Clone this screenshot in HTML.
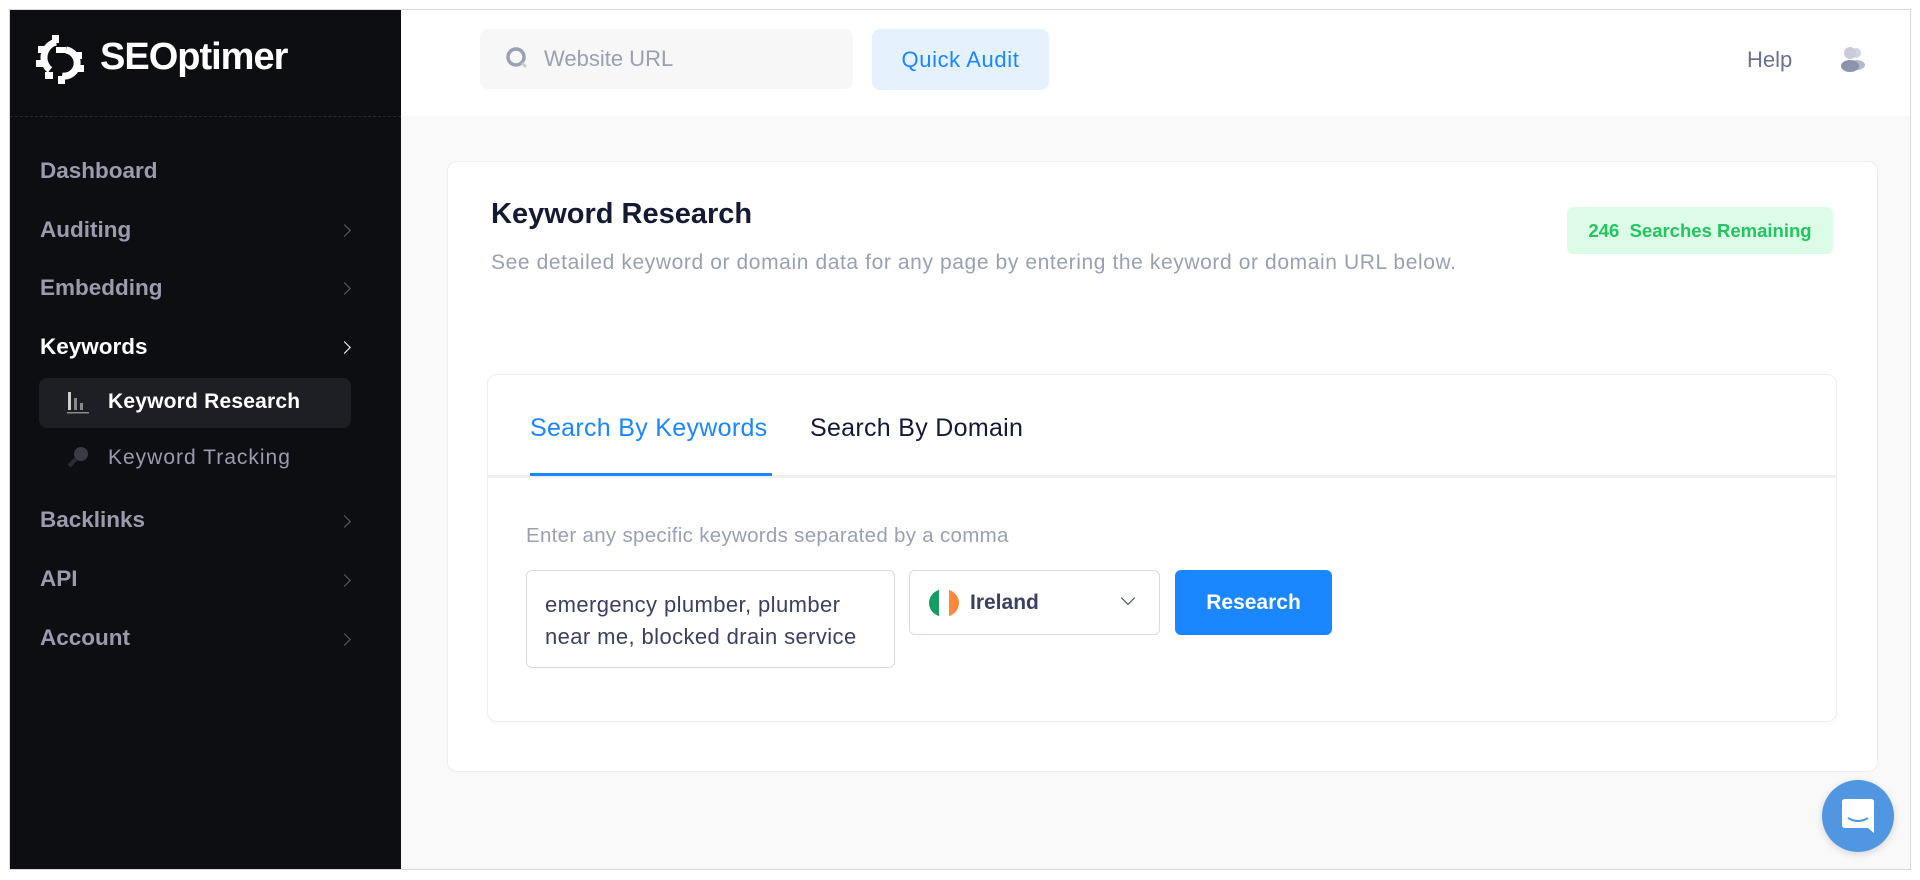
<!DOCTYPE html>
<html><head><meta charset="utf-8"><style>
*{box-sizing:border-box;margin:0;padding:0}
body{width:1920px;height:880px;background:#fff;font-family:"Liberation Sans",sans-serif;position:relative;overflow:hidden}
.frame{position:absolute;left:9px;top:9px;width:1902px;height:861px;border:1px solid #d9d9d9;background:#f9f9fa;overflow:hidden}
.side{position:absolute;left:0;top:0;width:391px;height:100%;background:#0d0e12}
.hdr{position:absolute;left:391px;top:0;right:0;height:106px;background:#fff}
.dash{position:absolute;left:0;top:106px;width:391px;border-top:1px dashed #2a2c33}
.nav{position:absolute;left:30px;font-size:22.5px;font-weight:bold;color:#9a9cae}
.chev{position:absolute;left:330px;width:9px;height:9px;border-right:1.5px solid #5c5f6c;border-top:1.5px solid #5c5f6c;transform:rotate(45deg)}
.card{position:absolute;left:437px;top:151px;width:1431px;height:611px;background:#fff;border:1px solid #eceef1;border-radius:10px}
.inner{position:absolute;left:39px;top:212px;width:1350px;height:348px;border:1px solid #eceef1;border-radius:10px;box-shadow:0 2px 4px rgba(0,0,0,.03)}
</style></head><body>
<div class="frame">
 <div class="side">
  <svg style="position:absolute;left:22px;top:20px" width="56" height="56" viewBox="0 0 56 56">
   <g fill="none" stroke="#fff" stroke-width="7">
    <path d="M24 12 A16 16 0 0 0 18 40"/>
    <path d="M34 20 A12 12 0 0 1 30 46"/>
   </g>
   <g fill="#fff">
    <rect x="20" y="5" width="7" height="8"/><rect x="6" y="16" width="8" height="7"/><rect x="4" y="30" width="8" height="7"/><rect x="13" y="42" width="8" height="7"/>
    <rect x="24" y="17" width="10" height="6"/><rect x="42" y="22" width="8" height="7"/><rect x="44" y="35" width="8" height="7"/><rect x="26" y="46" width="7" height="8"/>
   </g>
  </svg>
  <div style="position:absolute;left:90px;top:26px;font-size:38px;font-weight:bold;color:#fff;letter-spacing:-1px">SEOptimer</div>
  <div class="nav" style="top:148px">Dashboard</div>
  <div class="nav" style="top:207px">Auditing</div><div class="chev" style="top:216px"></div>
  <div class="nav" style="top:265px">Embedding</div><div class="chev" style="top:274px"></div>
  <div class="nav" style="top:324px;color:#fff">Keywords</div><div class="chev" style="top:333px;border-color:#fff"></div>
  <div style="position:absolute;left:29px;top:368px;width:312px;height:50px;background:#1e1f24;border-radius:8px"></div>
  <svg style="position:absolute;left:56px;top:380px" width="24" height="24" viewBox="0 0 24 24"><rect x="2" y="2" width="3" height="18" fill="#ccc"/><rect x="8" y="8" width="3" height="12" fill="#888"/><rect x="14" y="13" width="3" height="7" fill="#888"/><rect x="1" y="22" width="22" height="1.5" fill="#888"/></svg>
  <div class="nav" style="left:98px;top:380px;font-size:21px;color:#fff;letter-spacing:.2px">Keyword Research</div>
  <svg style="position:absolute;left:56px;top:435px" width="24" height="24" viewBox="0 0 24 24"><circle cx="15" cy="9" r="7" fill="#3a3c44"/><path d="M10 14 L3 21" stroke="#2a2c33" stroke-width="4"/></svg>
  <div class="nav" style="left:98px;top:436px;font-size:21px;font-weight:normal;color:#9a9cae;letter-spacing:1px">Keyword Tracking</div>
  <div class="nav" style="top:497px">Backlinks</div><div class="chev" style="top:507px"></div>
  <div class="nav" style="top:556px">API</div><div class="chev" style="top:566px"></div>
  <div class="nav" style="top:615px">Account</div><div class="chev" style="top:625px"></div>
 </div>
 <div class="dash"></div>
 <div class="hdr">
  <div style="position:absolute;left:79px;top:19px;width:373px;height:60px;background:#f7f7f8;border-radius:8px"></div>
  <svg style="position:absolute;left:104px;top:36px" width="26" height="26" viewBox="0 0 26 26"><circle cx="11" cy="11" r="8" fill="none" stroke="#9aa0b4" stroke-width="3.5"/><path d="M17 17 L21 21" stroke="#c8ccd6" stroke-width="3"/></svg>
  <div style="position:absolute;left:143px;top:36px;font-size:22px;color:#9aa0b4">Website URL</div>
  <div style="position:absolute;left:471px;top:19px;width:177px;height:61px;background:#e6f1fe;border-radius:8px;color:#1a86ff;font-size:22px;letter-spacing:.6px;text-align:center;line-height:61px">Quick Audit</div>
  <div style="position:absolute;left:1346px;top:37px;font-size:22px;color:#6b7190">Help</div>
  <svg style="position:absolute;left:1437px;top:35px" width="30" height="30" viewBox="0 0 30 30"><circle cx="18" cy="8" r="5" fill="#d2d5df"/><ellipse cx="19" cy="20" rx="8" ry="5" fill="#b6bac8"/><circle cx="12" cy="8" r="6" fill="#c8cbd6"/><ellipse cx="12" cy="21" rx="9" ry="6" fill="#8c93ab"/></svg>
 </div>
 <div class="card">
  <div style="position:absolute;left:43px;top:36px;font-size:29px;font-weight:bold;color:#141a33">Keyword Research</div>
  <div style="position:absolute;left:43px;top:89px;font-size:21px;letter-spacing:.6px;color:#9aa0b4;white-space:nowrap">See detailed keyword or domain data for any page by entering the keyword or domain URL below.</div>
  <div style="position:absolute;left:1119px;top:45px;width:266px;height:47px;background:#dcfce7;border-radius:6px;color:#22c55e;font-size:18.5px;font-weight:bold;text-align:center;line-height:47px;white-space:nowrap">246&nbsp; Searches Remaining</div>
  <div class="inner">
   <div style="position:absolute;left:42px;top:39px;font-size:25px;letter-spacing:.3px;color:#1a86ff">Search By Keywords</div>
   <div style="position:absolute;left:322px;top:39px;font-size:25px;letter-spacing:.3px;color:#141a33">Search By Domain</div>
   <div style="position:absolute;left:0;top:100px;width:100%;height:3px;background:#eff0f3"></div>
   <div style="position:absolute;left:42px;top:98px;width:242px;height:3px;background:#1a86ff"></div>
   <div style="position:absolute;left:38px;top:149px;font-size:20.5px;letter-spacing:.3px;color:#9aa0b4;white-space:nowrap">Enter any specific keywords separated by a comma</div>
   <div style="position:absolute;left:38px;top:195px;width:369px;height:98px;border:1px solid #d8dbe3;border-radius:6px;padding:18px 18px;font-size:22px;letter-spacing:.4px;line-height:32px;color:#3a4060;white-space:nowrap">emergency plumber, plumber<br>near me, blocked drain service</div>
   <div style="position:absolute;left:421px;top:195px;width:251px;height:65px;border:1px solid #d8dbe3;border-radius:6px">
    <div style="position:absolute;left:19px;top:18px;width:30px;height:28px;border-radius:50%;overflow:hidden;display:flex"><div style="flex:1;background:#169b62"></div><div style="flex:1;background:#fff"></div><div style="flex:1;background:#ff883e"></div></div>
    <div style="position:absolute;left:60px;top:20px;font-size:21px;font-weight:bold;color:#3a4060">Ireland</div>
    <div style="position:absolute;left:213px;top:22px;width:10px;height:10px;border-right:1.5px solid #3a4060;border-bottom:1.5px solid #3a4060;transform:rotate(45deg)"></div>
   </div>
   <div style="position:absolute;left:687px;top:195px;width:157px;height:65px;background:#1a86ff;border-radius:6px;color:#fff;font-size:21px;font-weight:bold;text-align:center;line-height:65px">Research</div>
  </div>
 </div>
 <div style="position:absolute;left:1812px;top:770px;width:72px;height:72px;border-radius:50%;background:#5096e0;box-shadow:0 2px 8px rgba(0,0,0,.15)">
  <svg style="position:absolute;left:20px;top:19px" width="32" height="34" viewBox="0 0 32 34"><path d="M3 0 H29 Q32 0 32 3 V34 L26 29 H3 Q0 29 0 26 V3 Q0 0 3 0Z" fill="#fff"/><path d="M6 19 Q16 25 26 19" fill="none" stroke="#5096e0" stroke-width="2"/></svg>
 </div>
</div>
</body></html>
